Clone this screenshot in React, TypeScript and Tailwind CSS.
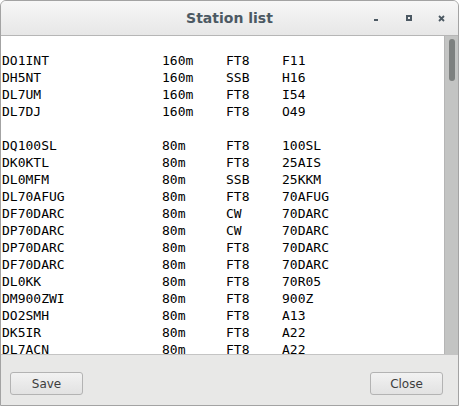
import React from "react";

const rows: (string[] | null)[] = [
  null,
  ["DO1INT", "160m", "FT8", "F11"],
  ["DH5NT", "160m", "SSB", "H16"],
  ["DL7UM", "160m", "FT8", "I54"],
  ["DL7DJ", "160m", "FT8", "O49"],
  null,
  ["DQ100SL", "80m", "FT8", "100SL"],
  ["DK0KTL", "80m", "FT8", "25AIS"],
  ["DL0MFM", "80m", "SSB", "25KKM"],
  ["DL70AFUG", "80m", "FT8", "70AFUG"],
  ["DF70DARC", "80m", "CW", "70DARC"],
  ["DP70DARC", "80m", "CW", "70DARC"],
  ["DP70DARC", "80m", "FT8", "70DARC"],
  ["DF70DARC", "80m", "FT8", "70DARC"],
  ["DL0KK", "80m", "FT8", "70R05"],
  ["DM900ZWI", "80m", "FT8", "900Z"],
  ["DO2SMH", "80m", "FT8", "A13"],
  ["DK5IR", "80m", "FT8", "A22"],
  ["DL7ACN", "80m", "FT8", "A22"],
];

export default function App() {
  return (
    <div className="w-[459px] h-[406px] bg-white">
      <div className="w-[459px] h-[406px] flex flex-col border border-[#a3a3a3] rounded-t-[6px] overflow-hidden bg-[#e8e8e7]">
        {/* Title bar */}
        <div className="relative h-[35px] shrink-0 flex items-center justify-center bg-gradient-to-b from-[#f7f7f7] to-[#e7e7e7] border-b border-[#b6b6b6]">
          <span className="font-['DejaVu_Sans',sans-serif] font-bold text-[14px] text-[#4c5963]">
            Station list
          </span>
          <div className="absolute right-0 top-0 h-full flex items-center">
            <div className="w-[33px] flex justify-center">
              <div className="w-[4px] h-[2px] bg-[#4c5963] mt-[4px]" />
            </div>
            <div className="w-[33px] flex justify-center">
              <div className="w-[6px] h-[6px] border-[2px] border-[#4c5963]" />
            </div>
            <div className="w-[33px] flex justify-center">
              <svg width="7" height="7" viewBox="0 0 7 7">
                <path d="M1 1 L6 6 M6 1 L1 6" stroke="#4c5963" strokeWidth="1.8" />
              </svg>
            </div>
          </div>
        </div>
        {/* Text area */}
        <div className="h-[318px] shrink-0 flex bg-white">
          <div className="flex-1 overflow-hidden font-['DejaVu_Sans_Mono',monospace] text-[13px] leading-[17px] text-black pl-[1px] -mt-[1px]">
            {rows.map((r, i) =>
              r ? (
                <div key={i} className="flex h-[17px] whitespace-pre">
                  <span className="w-[160px] shrink-0">{r[0]}</span>
                  <span className="w-[64px] shrink-0">{r[1]}</span>
                  <span className="w-[56px] shrink-0">{r[2]}</span>
                  <span>{r[3]}</span>
                </div>
              ) : (
                <div key={i} className="h-[17px]" />
              )
            )}
          </div>
          <div className="w-[14px] shrink-0 bg-[#c3c4c3] border-l border-[#b5b5b5] flex justify-center pt-[3px]">
            <div className="w-[6px] h-[42px] rounded-full bg-[#7d807f]" />
          </div>
        </div>
        {/* Bottom bar */}
        <div className="flex-1 flex items-start justify-between px-[9px] pt-[17px] border-t border-[#c4c4c4]">
          <button className="w-[73px] h-[23px] rounded-[3px] border border-[#b3b3b3] bg-gradient-to-b from-[#f2f2f2] to-[#e2e2e2] font-['DejaVu_Sans',sans-serif] text-[12px] text-[#3d3d3d]">
            Save
          </button>
          <button className="w-[73px] h-[23px] rounded-[3px] border border-[#b3b3b3] bg-gradient-to-b from-[#f2f2f2] to-[#e2e2e2] font-['DejaVu_Sans',sans-serif] text-[12px] text-[#3d3d3d] mr-[6px]">
            Close
          </button>
        </div>
      </div>
    </div>
  );
}
